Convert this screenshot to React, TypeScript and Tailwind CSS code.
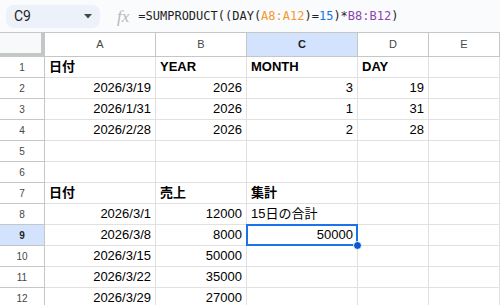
import React from "react";

const cols = ["A", "B", "C", "D", "E"];

type Cell = { t: string; align?: "l" | "r"; bold?: boolean };

const data: Record<number, (Cell | null)[]> = {
  1: [{ t: "日付", bold: true }, { t: "YEAR", bold: true }, { t: "MONTH", bold: true }, { t: "DAY", bold: true }, null],
  2: [{ t: "2026/3/19", align: "r" }, { t: "2026", align: "r" }, { t: "3", align: "r" }, { t: "19", align: "r" }, null],
  3: [{ t: "2026/1/31", align: "r" }, { t: "2026", align: "r" }, { t: "1", align: "r" }, { t: "31", align: "r" }, null],
  4: [{ t: "2026/2/28", align: "r" }, { t: "2026", align: "r" }, { t: "2", align: "r" }, { t: "28", align: "r" }, null],
  5: [null, null, null, null, null],
  6: [null, null, null, null, null],
  7: [{ t: "日付", bold: true }, { t: "売上", bold: true }, { t: "集計", bold: true }, null, null],
  8: [{ t: "2026/3/1", align: "r" }, { t: "12000", align: "r" }, { t: "15日の合計" }, null, null],
  9: [{ t: "2026/3/8", align: "r" }, { t: "8000", align: "r" }, { t: "50000", align: "r" }, null, null],
  10: [{ t: "2026/3/15", align: "r" }, { t: "50000", align: "r" }, null, null, null],
  11: [{ t: "2026/3/22", align: "r" }, { t: "35000", align: "r" }, null, null, null],
  12: [{ t: "2026/3/29", align: "r" }, { t: "27000", align: "r" }, null, null, null],
};

const font = { fontFamily: '"Liberation Sans", Arial, "Noto Sans CJK JP", sans-serif' };

export default function App() {
  const rows = Array.from({ length: 12 }, (_, i) => i + 1);
  return (
    <div className="w-[500px] h-[305px] overflow-hidden bg-white" style={font}>
      {/* top bar */}
      <div className="h-[33px] bg-[#f9fbfd] border-b border-[#c4c7c5] flex items-center">
        <div className="ml-[6px] w-[94px] h-[23px] rounded-[8px] bg-[#edf2fa] flex items-center justify-between pl-[8px] pr-[8px]">
          <span className="text-[14px] text-[#1f1f1f]" style={{ fontFamily: '"Roboto", "Liberation Sans", sans-serif' }}>C9</span>
          <svg width="8" height="5" viewBox="0 0 8 5" className="mr-[0px]">
            <path d="M0 0 L8 0 L4 4.5 Z" fill="#444746" />
          </svg>
        </div>
        <span
          className="ml-[17px] text-[17px] italic text-[#b8b8b8] leading-none"
          style={{ fontFamily: '"Liberation Serif", "Times New Roman", serif' }}
        >
          fx
        </span>
        <span
          className="ml-[9px] text-[12px] text-[#1f1f1f] whitespace-nowrap"
          style={{ fontFamily: '"DejaVu Sans Mono", "Liberation Mono", monospace' }}
        >
          =SUMPRODUCT((DAY(<span className="text-[#f29a2e]">A8:A12</span>)=<span className="text-[#1a73e8]">15</span>)*<span className="text-[#8e44ad]">B8:B12</span>)
        </span>
      </div>

      {/* grid */}
      <div className="grid grid-cols-[45px_111px_91px_111px_71px_71px]">
        {/* header row */}
        <div className="h-[24px] bg-[#f8f9fa] border-r-4 border-b-4 border-[#c4c7c5]" />
        {cols.map((c) => (
          <div
            key={c}
            className={`h-[24px] border-r border-b border-[#c4c7c5] flex items-center justify-center text-[11px] ${
              c === "C" ? "bg-[#d3e3fd] text-[#0b57d0] font-bold" : "bg-white text-[#444746]"
            }`}
          >
            <span className={c === "C" ? "text-[#1f1f1f]" : ""}>{c}</span>
          </div>
        ))}

        {rows.map((r) => (
          <React.Fragment key={r}>
            <div
              className={`h-[21px] border-r border-b border-[#c4c7c5] flex items-center justify-center text-[10px] ${
                r === 9 ? "bg-[#d3e3fd] text-[#1f1f1f] font-bold" : "bg-white text-[#444746]"
              }`}
            >
              {r}
            </div>
            {data[r].map((cell, ci) => {
              const selected = r === 9 && ci === 2;
              return (
                <div
                  key={ci}
                  className={`relative h-[21px] border-r border-b border-[#e1e1e1] flex items-center text-[13px] text-black px-[4px] ${
                    cell?.align === "r" ? "justify-end" : "justify-start"
                  } ${cell?.bold ? "font-bold" : ""}`}
                >
                  {selected && (
                    <>
                      <div className="absolute left-[-1px] top-[-1px] right-[-1px] bottom-[-1px] border-2 border-[#1a73e8]" />
                      <div className="absolute right-[-5px] bottom-[-5px] w-[9px] h-[9px] rounded-full bg-[#0b57d0] border border-white z-10" />
                    </>
                  )}
                  {cell && <span className="relative whitespace-nowrap">{cell.t}</span>}
                </div>
              );
            })}
          </React.Fragment>
        ))}
      </div>
    </div>
  );
}
